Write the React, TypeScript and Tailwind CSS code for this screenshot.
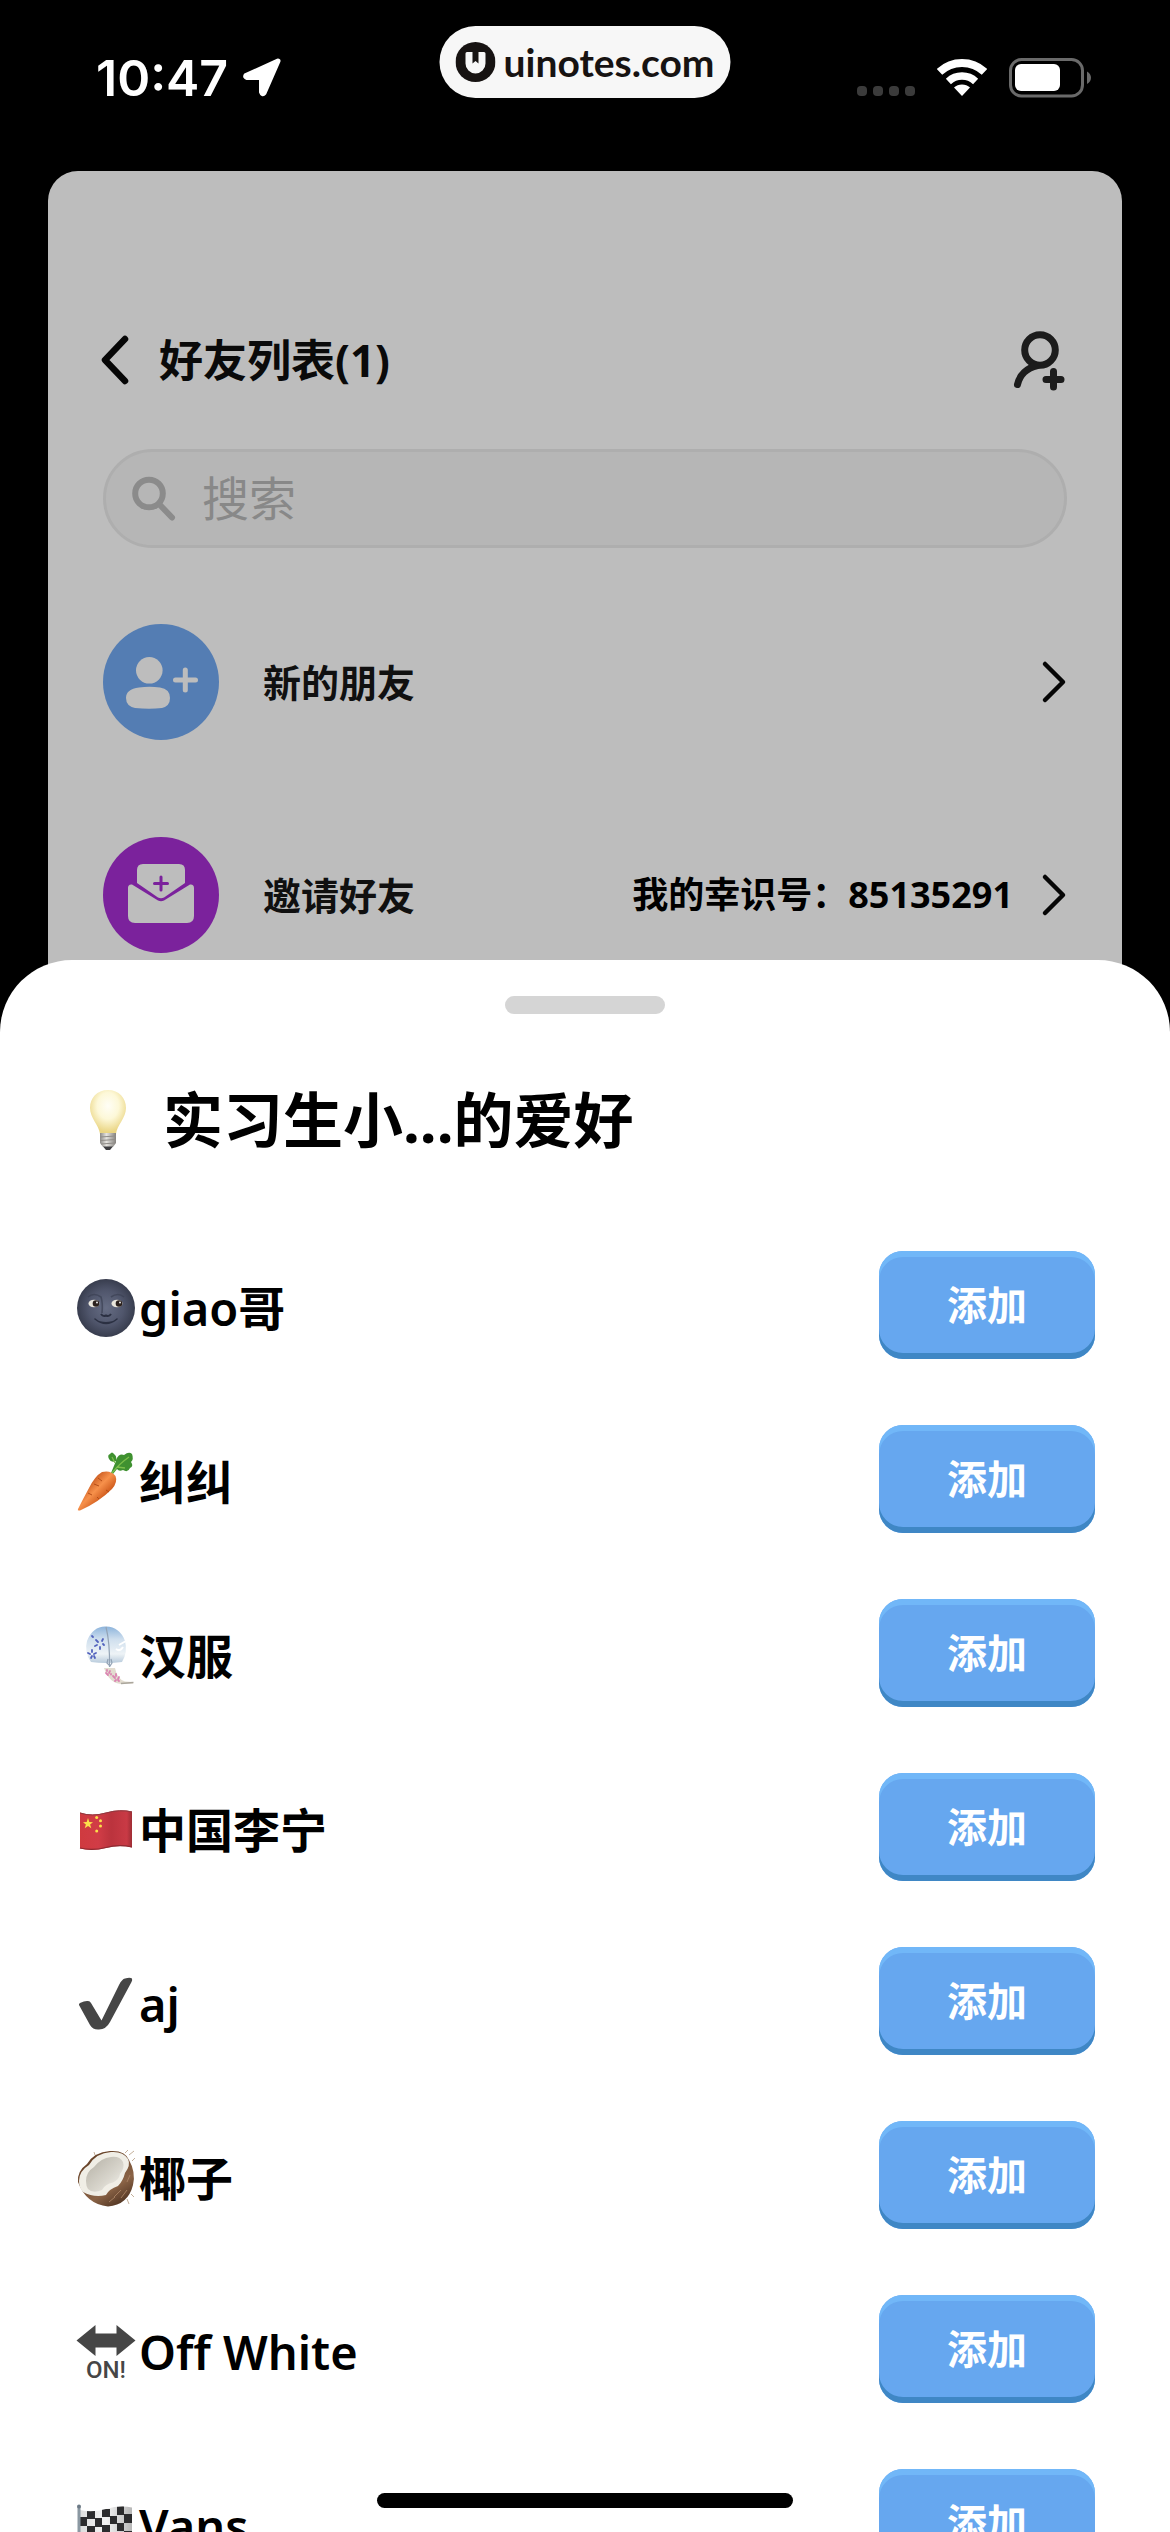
import React from "react";

interface Hobby {
  name: string;
  icon: React.ReactNode;
}

function LocationIcon() {
  return (
    <svg viewBox="0 0 40 40" className="size-10" aria-hidden="true">
      <path
        d="M36 3 4 17.500Q3 19 5 19.500H19.500V34Q20.500 37 22 35Z"
        fill="white"
        stroke="white"
        strokeWidth="5"
        strokeLinejoin="round"
      />
    </svg>
  );
}

function SignalDots() {
  return (
    <svg viewBox="0 0 58 40" className="h-10 w-[58px]" fill="#3b3b3b" aria-hidden="true">
      <rect x="0" y="28" width="10" height="10" rx="4" />
      <rect x="16" y="28" width="10" height="10" rx="4" />
      <rect x="32" y="28" width="10" height="10" rx="4" />
      <rect x="48" y="28" width="10" height="10" rx="4" />
    </svg>
  );
}

function WifiIcon() {
  return (
    <svg viewBox="0 -1 50 40" className="h-10 w-[50px]" fill="none" stroke="white" aria-hidden="true">
      <path d="M2.500 12.900A33 33 0 0 1 47.500 12.900" strokeWidth="8" />
      <path d="M11.400 22.400A20 20 0 0 1 38.600 22.400" strokeWidth="7.500" />
      <path d="M25 37 17 28.600A11.600 11.600 0 0 1 33 28.600Z" fill="white" stroke="none" />
    </svg>
  );
}

function BatteryIcon() {
  return (
    <svg viewBox="0 0 83 40" className="h-10 w-[83px]" aria-hidden="true">
      <rect x="1.500" y="1.500" width="72" height="36.500" rx="11" fill="none" stroke="#6a6a6a" strokeWidth="3" />
      <rect x="6" y="6" width="45" height="27" rx="6" fill="white" />
      <path d="M78 13.500Q82 16 82 19.700T78 26Z" fill="#6a6a6a" />
    </svg>
  );
}

function BrandLogo() {
  return (
    <svg viewBox="0 0 40 40" className="size-10" aria-hidden="true">
      <circle cx="20" cy="20" r="20" fill="#171312" />
      <path
        d="M11.500 10H17V21.500L20 19 23 21.500V10H28.500Q30 10 30 11.500V21.500A10 10 0 0 1 10 21.500V11.500Q10 10 11.500 10Z"
        fill="#f7f7f7"
      />
    </svg>
  );
}

function BackIcon() {
  return (
    <svg viewBox="0 0 32 50" className="h-[50px] w-8" aria-hidden="true">
      <path d="M26 4 6 25 26 46" fill="none" stroke="#060606" strokeWidth="6.500" strokeLinecap="round" strokeLinejoin="round" />
    </svg>
  );
}

function ForwardIcon() {
  return (
    <svg viewBox="0 0 26 44" className="h-11 w-[26px]" aria-hidden="true">
      <path d="M4 4 22 22 4 40" fill="none" stroke="#060606" strokeWidth="4.500" strokeLinecap="round" strokeLinejoin="round" />
    </svg>
  );
}

function AddFriendIcon() {
  return (
    <svg
      viewBox="0 0 56 64"
      className="h-16 w-14"
      fill="none"
      stroke="#1c1c1c"
      strokeWidth="7"
      strokeLinecap="round"
      aria-hidden="true"
    >
      <circle cx="29" cy="22" r="15.300" />
      <path d="M26.500 37.500C16 40 8.500 47 6.500 56.500" />
      <path d="M42.500 43.500V59M35 51.500H50" />
    </svg>
  );
}

function SearchIcon() {
  return (
    <svg viewBox="0 0 46 46" className="size-[46px]" fill="none" stroke="#8b8b8b" aria-hidden="true">
      <circle cx="17" cy="17.500" r="13.800" strokeWidth="6" />
      <path d="M28 29 40 41.500" strokeWidth="6" strokeLinecap="round" />
    </svg>
  );
}

function NewFriendBadge() {
  return (
    <svg viewBox="0 0 116 116" className="size-[116px]" aria-hidden="true">
      <circle cx="58" cy="58" r="58" fill="#547db3" />
      <circle cx="46.300" cy="46.300" r="13.300" fill="#bdbdbd" />
      <path
        d="M36 63.500Q46.500 62 57 63.500Q67 65 67 74Q67 82 59 84Q46.500 85.500 32 84Q23 82 23 74Q23 65 36 63.500Z"
        fill="#bdbdbd"
      />
      <path d="M82.300 46V66M72.500 56H92.500" stroke="#bdbdbd" strokeWidth="5" strokeLinecap="round" />
    </svg>
  );
}

function InviteBadge() {
  return (
    <svg viewBox="0 0 116 116" className="size-[116px]" aria-hidden="true">
      <circle cx="58" cy="58" r="58" fill="#7b229c" />
      <path d="M40 27H76Q82 27 82 33V46L61 60.500Q58 62 55 60.500L34 46V33Q34 27 40 27Z" fill="#bdbdbd" />
      <path
        d="M25 51Q25 47 29 47.500L55 63.500Q58 65 61 63.500L87 47.500Q91 47 91 51V79Q91 86 84 86H32Q25 86 25 79Z"
        fill="#bdbdbd"
      />
      <path d="M58 40V53M51.500 46.500H64.500" stroke="#7b229c" strokeWidth="3" strokeLinecap="round" />
    </svg>
  );
}

function BulbIcon() {
  return (
    <svg viewBox="0 0 60 60" className="size-[60px]" aria-hidden="true">
      <defs>
        <radialGradient id="bulb" cx="0.5" cy="0.36" r="0.6">
          <stop offset="0" stopColor="#fffef6" />
          <stop offset="0.500" stopColor="#fdf8d8" />
          <stop offset="1" stopColor="#ead583" />
        </radialGradient>
        <linearGradient id="bulbBase">
          <stop offset="0" stopColor="#8d8b88" />
          <stop offset="0.400" stopColor="#e6e4e0" />
          <stop offset="1" stopColor="#85827e" />
        </linearGradient>
      </defs>
      <path d="M29 0C40 0 47 8 47 18C47 28 38 35 37 44H21C20 35 11 28 11 18C11 8 18 0 29 0Z" fill="url(#bulb)" />
      <path d="M21 43H37V53L34 57H24L21 53Z" fill="url(#bulbBase)" />
      <path d="M21 47 37 46M21 50.500 37 49.500M22 54 36 53" stroke="#8f8c88" strokeWidth="1" />
      <path d="M24 56.500H34L31 60H27Z" fill="#3d3d40" />
    </svg>
  );
}

function MoonIcon() {
  return (
    <svg viewBox="0 0 62 62" className="size-[62px]" aria-hidden="true">
      <defs>
        <radialGradient id="moon" cx="0.5" cy="0.5" r="0.5">
          <stop offset="0" stopColor="#666d84" />
          <stop offset="0.600" stopColor="#50566c" />
          <stop offset="1" stopColor="#383d4e" />
        </radialGradient>
      </defs>
      <circle cx="31" cy="31" r="29" fill="url(#moon)" />
      <path d="M13 20Q19 15 26 20Q28 26 27 36M49 20Q43 15 36 20" fill="none" stroke="#3b4053" strokeWidth="1.600" opacity="0.7" />
      <ellipse cx="19" cy="26.500" rx="5.500" ry="3.800" fill="#e9e6dc" />
      <ellipse cx="42" cy="26.500" rx="5.500" ry="3.800" fill="#e9e6dc" />
      <circle cx="21" cy="26.500" r="3.300" fill="#2b211d" />
      <circle cx="44" cy="26.500" r="3.300" fill="#2b211d" />
      <circle cx="22" cy="25.500" r="0.900" fill="white" />
      <circle cx="45" cy="25.500" r="0.900" fill="white" />
      <path d="M26 37Q28 40 31 38.500Q34 40 36 37" fill="none" stroke="#2b3042" strokeWidth="2" />
      <path d="M20 42Q31 51 42 42M25 45Q31 46.500 37 45" fill="none" stroke="#2b3042" strokeWidth="1.600" strokeLinecap="round" />
    </svg>
  );
}

function CarrotIcon() {
  return (
    <svg viewBox="0 0 62 62" className="size-[62px]" aria-hidden="true">
      <defs>
        <linearGradient id="carrot" x1="0.250" y1="0.300" x2="0.650" y2="0.700">
          <stop offset="0" stopColor="#c95a20" />
          <stop offset="0.500" stopColor="#f7914b" />
          <stop offset="1" stopColor="#cf5a1c" />
        </linearGradient>
      </defs>
      <path
        d="M36 22 41 10Q36 12 34 8Q32 4 35 3Q37 0 39 3Q42 5 41 9Q44 2 49 4Q54 0 57 3Q59 8 56 11Q59 15 55 17Q53 22 48 19Q44 21 42 18L38 23Z"
        fill="#3f9130"
      />
      <path d="M37 22Q44 13 54 6M42 16 50 17M37 6 40 12" fill="none" stroke="#7cbf4a" strokeWidth="1.300" />
      <path d="M3 58Q2 60 5 59.500Q24 51 37 38Q43 31 40.500 25Q36 19 27 21Q20 25 14 37Q8 48 3 58Z" fill="url(#carrot)" />
      <path d="M23 27 27 30M19 33 24 35M31 39 34 41M13 42 17 44M22 46 24 48" stroke="#b44d17" strokeWidth="1" />
    </svg>
  );
}

function WindChimeIcon() {
  return (
    <svg viewBox="0 0 62 62" className="size-[62px]" aria-hidden="true">
      <defs>
        <linearGradient id="chime" x1="0" y1="0" x2="0" y2="1">
          <stop offset="0" stopColor="#8db4dc" />
          <stop offset="0.350" stopColor="#cfdfee" />
          <stop offset="0.750" stopColor="#eef3f6" />
          <stop offset="1" stopColor="#b8cbdc" />
        </linearGradient>
      </defs>
      <path d="M16 37Q9 27 12 16Q18 1 31 1.500Q45 2 50 16Q53 27 47 37Q31 39 16 37Z" fill="url(#chime)" />
      <path d="M31 2Q35 18 34.500 42M33 34 32 38 35 41 37 38 36 34" fill="none" stroke="#93a3b5" strokeWidth="1.200" />
      <path d="M44 20 51 16M41 24Q45 27 48 22" stroke="white" strokeWidth="2" fill="none" />
      <g fill="none" stroke="#5262bd" strokeWidth="1.800" strokeLinecap="round">
        <path d="M21 15 23 17M28 14 27 16M20 21 22 20M29 20 28 19M25 22V24" />
        <path d="M17 25V27M13 28 15 29M21 28 19 29M16 33 17 31M20 33 19 31" />
        <path d="M17 11 18 12" />
      </g>
      <path d="M29 43H40Q42 54 50 56.500L58 57V58.500L46 59Q34 58 29 43Z" fill="#e2dccf" />
      <path d="M46 58.500 58.500 57.500" stroke="#aaa69c" strokeWidth="1.500" />
      <g fill="none" stroke="#db83b1" strokeWidth="1.800" strokeLinecap="round">
        <path d="M32 45V46M35 46 34 48M31 48 33 50M36 49V49.500" />
        <path d="M41 49V51M38 51 40 53M44 52 43 54M40 56 41 55M44 56 43 55" />
      </g>
    </svg>
  );
}

function ChinaFlagIcon() {
  return (
    <svg viewBox="0 0 62 62" className="size-[62px]" aria-hidden="true">
      <defs>
        <linearGradient id="flag">
          <stop offset="0" stopColor="#cf3a3f" />
          <stop offset="0.350" stopColor="#d13c46" />
          <stop offset="0.600" stopColor="#bb333d" />
          <stop offset="0.900" stopColor="#c93a45" />
          <stop offset="1" stopColor="#9e2d35" />
        </linearGradient>
      </defs>
      <path d="M5 13.500Q17 17.500 31 13.500Q45 9.500 57 12.500V48.500Q44 45.500 31 49Q17 52.500 5 49.500Z" fill="url(#flag)" />
      <path d="M5 14Q17 18 31 14Q45 10 57 13" fill="none" stroke="#8d3a40" strokeWidth="1" />
      <path d="M5 49Q17 52 31 48.500Q44 45 57 48" fill="none" stroke="#8d2a31" strokeWidth="1.200" />
      <path d="M13 19 14.300 22.900 18 23.200 15.100 25.500 16.300 29.300 13 27 9.700 29.300 10.900 25.500 8 23.200 11.700 22.900Z" fill="#fce04a" />
      <g fill="#fce04a">
        <circle cx="21.700" cy="18.500" r="1.500" />
        <circle cx="25.500" cy="21.700" r="1.500" />
        <circle cx="25.500" cy="27" r="1.500" />
        <circle cx="21.700" cy="32" r="1.500" />
      </g>
    </svg>
  );
}

function CheckIcon() {
  return (
    <svg viewBox="0 0 62 62" className="size-[62px]" aria-hidden="true">
      <path
        d="M4 32Q3.500 31 5 30Q10 27.500 13 28Q15 28 16 30L26.500 47.500 44 12Q47 6 50 5.500Q55 4 57 5.500Q57.500 7 56.500 9L35 49Q31 56.500 24 56.500Q18 57 15 52Z"
        fill="#464646"
      />
    </svg>
  );
}

function CoconutIcon() {
  return (
    <svg viewBox="0 0 62 62" className="size-[62px]" aria-hidden="true">
      <defs>
        <linearGradient id="shell" x1="0.300" y1="0.200" x2="0.800" y2="1">
          <stop offset="0" stopColor="#6a452b" />
          <stop offset="0.600" stopColor="#8a6346" />
          <stop offset="1" stopColor="#4a2f1e" />
        </linearGradient>
        <linearGradient id="coconut" x1="0" y1="0" x2="1" y2="1">
          <stop offset="0" stopColor="#b3afa4" />
          <stop offset="0.600" stopColor="#d8d5cc" />
          <stop offset="1" stopColor="#f6f5f0" />
        </linearGradient>
      </defs>
      <path d="M54 8 59 4M50 6 53 3M57 14 60 11M56 47 59 50M52 52 54 57M20 8 19 5" stroke="#b59a80" strokeWidth="0.800" />
      <path d="M3 35Q2 24 12 17Q19 5 35 4Q50 3 54 13Q61 25 58 38Q53 58 33 59.500Q11 57 3 35Z" fill="url(#shell)" />
      <path d="M4 34Q4 24 14 18Q21 6 36 5Q48 4 53 12Q56 18 50 26Q48 34 43 39Q34 42 31 48Q19 51 8 45Q4 41 4 34Z" fill="#f0eee6" />
      <path
        d="M11 34Q11 25 19 20Q26 11 36 10Q45 9 48 15Q50 21 45 27Q44 33 38 35.500Q30 37 27 43Q18 47 13 42Q11 39 11 34Z"
        fill="url(#coconut)"
      />
      <path d="M39 50 46 43M34 55 40 50M46 51 52 43M52 35 55 28" stroke="#a98264" strokeWidth="0.900" />
    </svg>
  );
}

function OnArrowIcon() {
  return (
    <svg viewBox="0 0 62 62" className="size-[62px]" fill="#464646" aria-hidden="true">
      <path d="M1.500 19.500 20.500 4V12.500H41.500V4L60.500 19.500 41.500 35V26.500H20.500V35Z" />
      <text x="31" y="57" textAnchor="middle" fontFamily="Liberation Sans Narrow, Roboto, sans-serif" fontSize="24" fontWeight="500">
        ON!
      </text>
    </svg>
  );
}

function RaceFlagIcon() {
  return (
    <svg viewBox="0 0 62 62" className="size-[62px]" aria-hidden="true">
      <defs>
        <clipPath id="raceShape">
          <path d="M5 15Q17 18 31 14Q45 10 57 12.500V49Q44 46 31 50Q17 53 5 50Z" />
        </clipPath>
        <linearGradient id="raceCloth">
          <stop offset="0" stopColor="#dcdcdc" />
          <stop offset="0.500" stopColor="#f3f3f3" />
          <stop offset="1" stopColor="#b5b5b5" />
        </linearGradient>
      </defs>
      <g clipPath="url(#raceShape)">
        <rect x="4" y="8" width="54" height="46" fill="url(#raceCloth)" />
        <g fill="#2c2c2e">
          <path d="M12 16H20V24H12ZM27 14H35V22H27ZM42 11H49V20H42Z" />
          <path d="M5 22H12V31H5ZM20 23H27V32H20ZM35 21H42V29H35ZM49 19H57V28H49Z" />
          <path d="M12 31H20V39H12ZM27 30H35V38H27ZM42 28H49V36H42Z" />
          <path d="M5 39H12V47H5ZM20 39H27V47H20ZM35 37H42V45H35ZM49 36H57V44H49Z" />
        </g>
      </g>
      <rect x="2.500" y="12" width="3" height="50" fill="#8b98a2" />
      <circle cx="4" cy="11.500" r="2" fill="#6d7a86" />
    </svg>
  );
}

const hobbies: Hobby[] = [
  { name: "giao哥", icon: <MoonIcon /> },
  { name: "纠纠", icon: <CarrotIcon /> },
  { name: "汉服", icon: <WindChimeIcon /> },
  { name: "中国李宁", icon: <ChinaFlagIcon /> },
  { name: "aj", icon: <CheckIcon /> },
  { name: "椰子", icon: <CoconutIcon /> },
  { name: "Off White", icon: <OnArrowIcon /> },
  { name: "Vans", icon: <RaceFlagIcon /> },
];

function StatusBar() {
  return (
    <div className="flex h-[156px] shrink-0 items-center justify-between pl-24 pr-[78px]">
      <div className="flex items-center gap-3.5">
        <span className="font-['Inter',sans-serif] text-[50px] leading-[60px] font-semibold text-white">10:47</span>
        <LocationIcon />
      </div>
      <div className="flex items-center gap-[22px]">
        <SignalDots />
        <WifiIcon />
        <BatteryIcon />
      </div>
    </div>
  );
}

function FriendsPage() {
  return (
    <main className="mx-12 mt-[15px] shrink-0 rounded-t-[30px] bg-[#bdbdbd] px-[55px] pt-[157px] pb-[87px]">
      <header className="flex h-16 items-center justify-between">
        <div className="flex items-center gap-7">
          <button type="button" aria-label="返回" className="-ml-1">
            <BackIcon />
          </button>
          <h1 className="text-[44px] leading-[60px] font-bold text-[#0a0a0a]">好友列表(1)</h1>
        </div>
        <button type="button" aria-label="添加好友">
          <AddFriendIcon />
        </button>
      </header>

      <label className="mt-[57px] flex h-[99px] items-center gap-6 rounded-full border-3 border-[#aeaeae] bg-[#b6b6b6] px-[26px]">
        <SearchIcon />
        <input
          type="text"
          placeholder="搜索"
          aria-label="搜索"
          className="h-16 min-w-0 flex-1 bg-transparent text-[47px] text-black outline-none placeholder:text-[#888888]"
        />
      </label>

      <nav className="mt-[76px] flex flex-col gap-[97px]">
        <a href="#new" className="flex items-center">
          <NewFriendBadge />
          <span className="ml-11 flex-1 text-[38px] leading-[56px] font-bold text-[#101010]">新的朋友</span>
          <ForwardIcon />
        </a>
        <a href="#invite" className="flex items-center">
          <InviteBadge />
          <span className="ml-11 flex-1 text-[38px] leading-[56px] font-bold text-[#101010]">邀请好友</span>
          <span className="mr-7 text-[36px] leading-[56px] font-bold text-black">我的幸识号：85135291</span>
          <ForwardIcon />
        </a>
      </nav>
    </main>
  );
}

function HobbyRow({ name, icon }: Hobby) {
  return (
    <li className="flex items-center justify-between">
      <div className="flex items-center gap-0.5 pt-1.5">
        {icon}
        <span className="text-[47px] leading-[62px] font-semibold text-black">{name}</span>
      </div>
      <button
        type="button"
        className="h-[108px] w-[216px] rounded-3xl bg-[#66a7ef] text-[40px] leading-[56px] font-bold text-white shadow-[inset_0_6px_0_#71b7f8,inset_0_-6px_0_#3f87c5]"
      >
        添加
      </button>
    </li>
  );
}

function HobbySheet() {
  return (
    <section className="relative -mt-20 min-h-0 flex-1 overflow-hidden rounded-t-[72px] bg-white px-[75px] pt-9">
      <div className="mx-auto h-[18px] w-[160px] rounded-full bg-[#d5d5d5]" />
      <h2 className="mt-[66px] flex items-center gap-6 pl-1 text-[60px] leading-[80px] font-bold text-black">
        <BulbIcon />
        <span>实习生小...的爱好</span>
      </h2>
      <ul className="mt-[91px] flex flex-col gap-[66px]">
        {hobbies.map((hobby) => (
          <HobbyRow key={hobby.name} name={hobby.name} icon={hobby.icon} />
        ))}
      </ul>
    </section>
  );
}

export default function App() {
  return (
    <div className="relative flex h-screen flex-col overflow-hidden bg-black font-['Noto_Sans','Noto_Sans_CJK_SC',sans-serif]">
      <StatusBar />
      <a
        href="#uinotes"
        className="absolute top-[26px] left-1/2 flex h-[72px] -translate-x-1/2 items-center gap-2 rounded-full bg-[#f7f7f7] pr-4 pl-4 font-['Lato',sans-serif] text-[39px] leading-[48px] font-bold text-[#171312]"
      >
        <BrandLogo />
        uinotes.com
      </a>
      <FriendsPage />
      <HobbySheet />
      <div className="absolute bottom-6 left-1/2 h-[15px] w-[416px] -translate-x-1/2 rounded-full bg-black" />
    </div>
  );
}
